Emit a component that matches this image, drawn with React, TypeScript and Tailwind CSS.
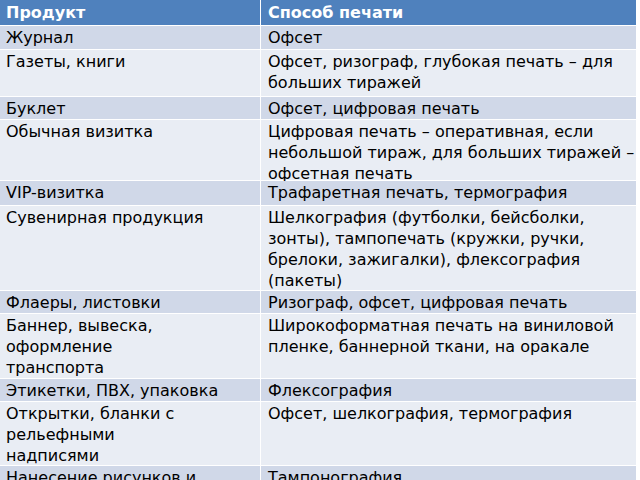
import React from 'react';

type Row = { product: React.ReactNode; method: React.ReactNode; h: string };

const rows: Row[] = [
  { product: 'Журнал', method: 'Офсет', h: 'h-[23px]' },
  {
    product: 'Газеты, книги',
    method: (
      <>
        Офсет, ризограф, глубокая печать – для
        <br />
        больших тиражей
      </>
    ),
    h: 'h-[46px]',
  },
  { product: 'Буклет', method: 'Офсет, цифровая печать', h: 'h-[22px]' },
  {
    product: 'Обычная визитка',
    method: (
      <>
        Цифровая печать – оперативная, если
        <br />
        небольшой тираж, для больших тиражей –
        <br />
        офсетная печать
      </>
    ),
    h: 'h-[60px]',
  },
  { product: 'VIP-визитка', method: 'Трафаретная печать, термография', h: 'h-[24px]' },
  {
    product: 'Сувенирная продукция',
    method: (
      <>
        Шелкография (футболки, бейсболки,
        <br />
        зонты), тампопечать (кружки, ручки,
        <br />
        брелоки, зажигалки), флексография
        <br />
        (пакеты)
      </>
    ),
    h: 'h-[84px]',
  },
  { product: 'Флаеры, листовки', method: 'Ризограф, офсет, цифровая печать', h: 'h-[22px]' },
  {
    product: (
      <>
        Баннер, вывеска,
        <br />
        оформление
        <br />
        транспорта
      </>
    ),
    method: (
      <>
        Широкоформатная печать на виниловой
        <br />
        пленке, баннерной ткани, на оракале
      </>
    ),
    h: 'h-[64px]',
  },
  { product: 'Этикетки, ПВХ, упаковка', method: 'Флексография', h: 'h-[22px]' },
  {
    product: (
      <>
        Открытки, бланки с
        <br />
        рельефными
        <br />
        надписями
      </>
    ),
    method: 'Офсет, шелкография, термография',
    h: 'h-[63px]',
  },
  { product: 'Нанесение рисунков и', method: 'Тампонография', h: 'h-[24px]' },
];

export default function App() {
  return (
    <div className="h-[480px] w-[640px] overflow-hidden bg-white font-['DejaVu_Sans',sans-serif] text-[16px] leading-[21px] text-black">
      <div className="grid w-[636px] grid-cols-[260px_minmax(0,1fr)] gap-px bg-white">
        {/* Header */}
        <div className="h-[25px] bg-[#4f81bd] px-[6px] pt-[2px] font-bold text-white">Продукт</div>
        <div className="h-[25px] bg-[#4f81bd] px-[7px] pt-[2px] font-bold text-white">Способ печати</div>

        {rows.map((r, i) => {
          const bg = i % 2 === 0 ? 'bg-[#d0d8e8]' : 'bg-[#e9edf4]';
          return (
            <React.Fragment key={i}>
              <div className={`${bg} ${r.h} whitespace-nowrap px-[6px] pt-[1px]`}>{r.product}</div>
              <div className={`${bg} ${r.h} whitespace-nowrap px-[7px] pt-[1px]`}>{r.method}</div>
            </React.Fragment>
          );
        })}
      </div>
    </div>
  );
}
